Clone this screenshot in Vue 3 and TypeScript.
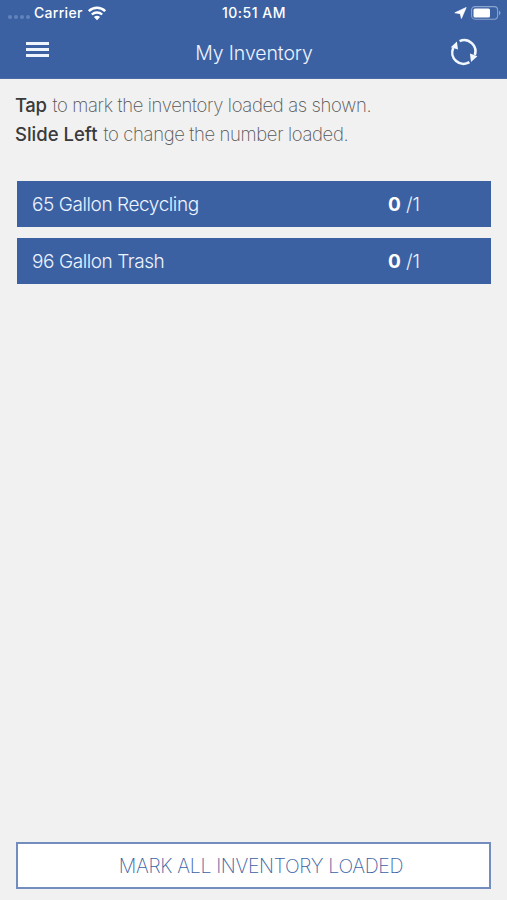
<script setup lang="ts">
import { ref } from 'vue'

interface InventoryItem {
  name: string
  loaded: number
  total: number
}

const items = ref<InventoryItem[]>([
  { name: '65 Gallon Recycling', loaded: 0, total: 1 },
  { name: '96 Gallon Trash', loaded: 0, total: 1 },
])

function toggle(item: InventoryItem): void {
  item.loaded = item.loaded === item.total ? 0 : item.total
}

function markAll(): void {
  items.value.forEach((item) => { item.loaded = item.total })
}
</script>

<template>
  <div class="screen">
    <header class="header">
      <div class="status">
        <div class="carrier">
          <span class="signal"><i v-for="n in 4" :key="n"></i></span>
          <span class="carrier-name">Carrier</span>
          <svg class="wifi" width="20" height="15" viewBox="0 0 20 15" fill="none" stroke="#fff">
            <path d="M1.8 5.2C6.5.7 13.5.7 18.2 5.2" stroke-width="2.5" />
            <path d="M4.8 8.5C7.8 5.8 12.2 5.8 15.2 8.5" stroke-width="2.3" />
            <path d="M6.9 11Q10 8.4 13.1 11L10 14.2Z" fill="#fff" stroke="none" />
          </svg>
        </div>
        <span class="clock">10:51 AM</span>
        <div class="indicators">
          <svg width="13" height="12" viewBox="0 0 13 12"><path d="M12.2.5 7.4 11.5 6.3 6.7.8 5.8Z" fill="#fff" stroke="#fff" stroke-width=".7" /></svg>
          <svg width="31" height="14" viewBox="0 0 31 14">
            <rect x=".6" y=".6" width="26" height="12.6" rx="3.4" fill="none" stroke="#8ca5d0" stroke-width="1.1" />
            <rect x="2.5" y="2.4" width="16.5" height="9" rx="1.5" fill="#fff" />
            <path d="M28 4.6Q31 7 28 9.4Z" fill="#8ca5d0" />
          </svg>
        </div>
      </div>
      <div class="nav">
        <button class="menu" aria-label="Menu"><i></i><i></i><i></i></button>
        <h1>My Inventory</h1>
        <button class="refresh" aria-label="Refresh">
          <svg width="28" height="28" viewBox="0 0 28 28" fill="none" stroke="#f2f7ff" stroke-width="2.6">
            <path d="M9.6 3.1A11.3 11.3 0 0 1 24.8 17" />
            <path d="M19.4 24.2A11.3 11.3 0 0 1 3.2 10" />
            <path d="M6.9 3.6 8 11.6.8 9.2Z M19.9 15.6 27.4 18.2 21 24Z" fill="#f2f7ff" stroke="none" />
          </svg>
        </button>
      </div>
    </header>

    <main class="content">
      <div class="help">
        <p class="help-tap"><b>Tap</b><span>to mark the inventory loaded as shown.</span></p>
        <p class="help-slide"><b>Slide Left</b><span>to change the number loaded.</span></p>
      </div>
      <ul class="items">
        <li v-for="item in items" :key="item.name" @click="toggle(item)">
          <span class="name">{{ item.name }}</span>
          <span class="count"><b>{{ item.loaded }}</b><span>/{{ item.total }}</span></span>
        </li>
      </ul>
    </main>

    <button class="mark-all" @click="markAll"><span>MARK ALL INVENTORY LOADED</span></button>
  </div>
</template>

<style>
body { background: #f1f1f1; }
</style>

<style scoped>
.screen {
  box-sizing: border-box;
  display: flex;
  flex-direction: column;
  height: 900px;
  padding-bottom: 11px;
  background: #f1f1f1;
  font-family: Inter, "Liberation Sans", sans-serif;
  font-weight: 300;
}
button { padding: 0; border: 0; background: none; font: inherit; }
.header {
  box-sizing: border-box;
  height: 79px;
  background: #3b61a3;
  border-bottom: 1px solid #4a6ba6;
  color: #fff;
}
.status {
  display: grid;
  grid-template-columns: 1fr auto 1fr;
  align-items: center;
  height: 26px;
  padding: 0 5px 0 8px;
  font-size: 14px;
  font-weight: 500;
}
.carrier { display: flex; align-items: center; }
.signal { display: flex; gap: 2px; width: 26px; padding-top: 8px; }
.signal i { width: 4px; height: 4px; border-radius: 50%; background: #6283bb; }
.carrier-name { width: 53px; letter-spacing: 0.3px; margin-top: -1px; }
.indicators { display: flex; justify-content: flex-end; align-items: center; gap: 4px; }
.clock { margin: -1px 2px 0 0; letter-spacing: 0.5px; }
.nav {
  display: grid;
  grid-template-columns: 1fr auto 1fr;
  align-items: center;
  height: 52px;
  padding: 0 29px 0 26px;
}
.menu { display: flex; flex-direction: column; gap: 3px; width: 23px; margin-bottom: 5px; }
.menu i { height: 3px; background: #eef3fc; }
h1 { margin: 2px 0 0 4px; color: #edf3ff; font-size: 19.5px; font-weight: 300; letter-spacing: -0.1px; }
.refresh { justify-self: end; height: 28px; }
.refresh svg { display: block; }
.content { flex: 1; padding: 12px 16px 0; }
.help { height: 90px; font-size: 18.5px; line-height: 29px; color: #555; white-space: nowrap; }
.help p { display: flex; gap: 6px; margin: 0 0 0 -1px; }
.help b { font-weight: 500; color: #3a3a3a; }
.help span { font-weight: 200; letter-spacing: -0.36px; }
.help-tap b { letter-spacing: -0.4px; }
.help-slide b { letter-spacing: 0; }
.items { display: grid; gap: 11px; margin: 0; padding: 0 0 0 1px; list-style: none; }
.items li {
  display: flex;
  align-items: center;
  height: 46px;
  padding-left: 15px;
  background: #3b61a3;
  color: #edf3ff;
  font-size: 19px;
}
.name { width: 356px; letter-spacing: -0.42px; }
.count { display: flex; gap: 6px; }
.count b { width: 12px; color: #fff; font-weight: 700; }
.mark-all {
  box-sizing: border-box;
  height: 47px;
  margin: 0 16px;
  border: 2px solid #738dbf;
  background: #fff;
  color: #3b61a3;
  font-size: 19.5px;
  font-weight: 200;
  letter-spacing: -0.33px;
}
.mark-all span { margin-left: 15px; }
</style>
